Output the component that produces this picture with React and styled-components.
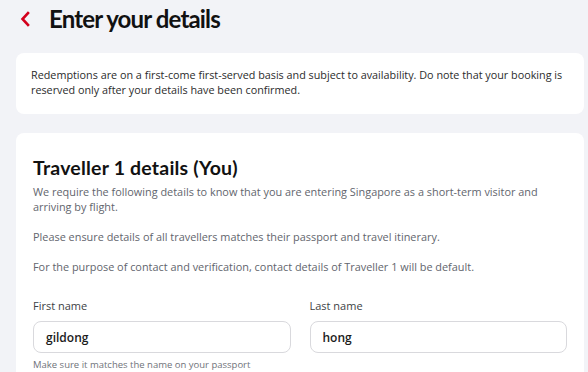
import React from 'react';
import styled, { createGlobalStyle } from 'styled-components';

const Global = createGlobalStyle`
  html, body {
    margin: 0;
    padding: 0;
    background: #f2f3f7;
    font-family: "Open Sans", "Liberation Sans", sans-serif;
  }
`;

const Page = styled.div`
  width: 588px;
  height: 372px;
  overflow: hidden;
  background: #f2f3f7;
  padding: 0 4px 0 16px;
  box-sizing: border-box;
`;

const Header = styled.div`
  display: flex;
  align-items: center;
  height: 37px;
  padding-left: 4px;
  gap: 19px;
`;

const Back = styled.svg`
  width: 10px;
  height: 16px;
  flex: none;
`;

const Title = styled.h1`
  margin: 0;
  font-family: "Lato", "Open Sans", sans-serif;
  font-size: 24px;
  font-weight: 700;
  color: #111;
  letter-spacing: -0.85px;
`;

const Card = styled.div`
  background: #fff;
  border-radius: 8px;
  padding: ${p => p.$pad};
  margin-top: ${p => p.$top};
`;

const Notice = styled.p`
  margin: 0;
  font-size: 10.8px;
  line-height: 14.5px;
  color: #2b2b2b;
`;

const Heading = styled.h2`
  margin: 0 0 4px;
  font-family: "Lato", "Open Sans", sans-serif;
  font-size: 19.5px;
  line-height: 24px;
  font-weight: 700;
  color: #111;
  letter-spacing: 0.2px;
`;

const Body = styled.p`
  margin: 0 0 15px;
  font-size: 10.9px;
  line-height: 15px;
  color: #62656d;
`;

const Fields = styled.div`
  display: grid;
  grid-template-columns: 1fr 1fr;
  column-gap: 19px;
  margin-top: 24px;
`;

const Field = styled.div`
  display: flex;
  flex-direction: column;
`;

const Label = styled.label`
  font-size: 11px;
  line-height: 15px;
  color: #3d3f45;
  margin-bottom: 8px;
`;

const Input = styled.div`
  height: 32px;
  border: 1px solid #d9d9dd;
  border-radius: 8px;
  box-sizing: border-box;
  display: flex;
  align-items: center;
  padding-left: 12px;
  font-size: 12px;
  font-weight: 600;
  color: #1b1b1b;
`;

const Hint = styled.div`
  font-size: 9.5px;
  color: #70737a;
  margin-top: 5px;
`;

export default function App() {
  return (
    <Page>
      <Global />
      <Header>
        <Back viewBox="0 0 10 16">
          <path d="M8 2 L2.5 8 L8 14" fill="none" stroke="#d3001c" strokeWidth="2.6" strokeLinecap="square" />
        </Back>
        <Title>Enter your details</Title>
      </Header>
      <Card $pad="15px 15px 17px 15px" $top="16px">
        <Notice>
          Redemptions are on a first-come first-served basis and subject to availability. Do note that your booking is reserved only after your details have been confirmed.
        </Notice>
      </Card>
      <Card $pad="23px 17px 20px 17px" $top="19px">
        <Heading>Traveller 1 details (You)</Heading>
        <Body>We require the following details to know that you are entering Singapore as a short-term visitor and arriving by flight.</Body>
        <Body>Please ensure details of all travellers matches their passport and travel itinerary.</Body>
        <Body>For the purpose of contact and verification, contact details of Traveller 1 will be default.</Body>
        <Fields>
          <Field>
            <Label>First name</Label>
            <Input>gildong</Input>
            <Hint>Make sure it matches the name on your passport</Hint>
          </Field>
          <Field>
            <Label>Last name</Label>
            <Input>hong</Input>
          </Field>
        </Fields>
      </Card>
    </Page>
  );
}
